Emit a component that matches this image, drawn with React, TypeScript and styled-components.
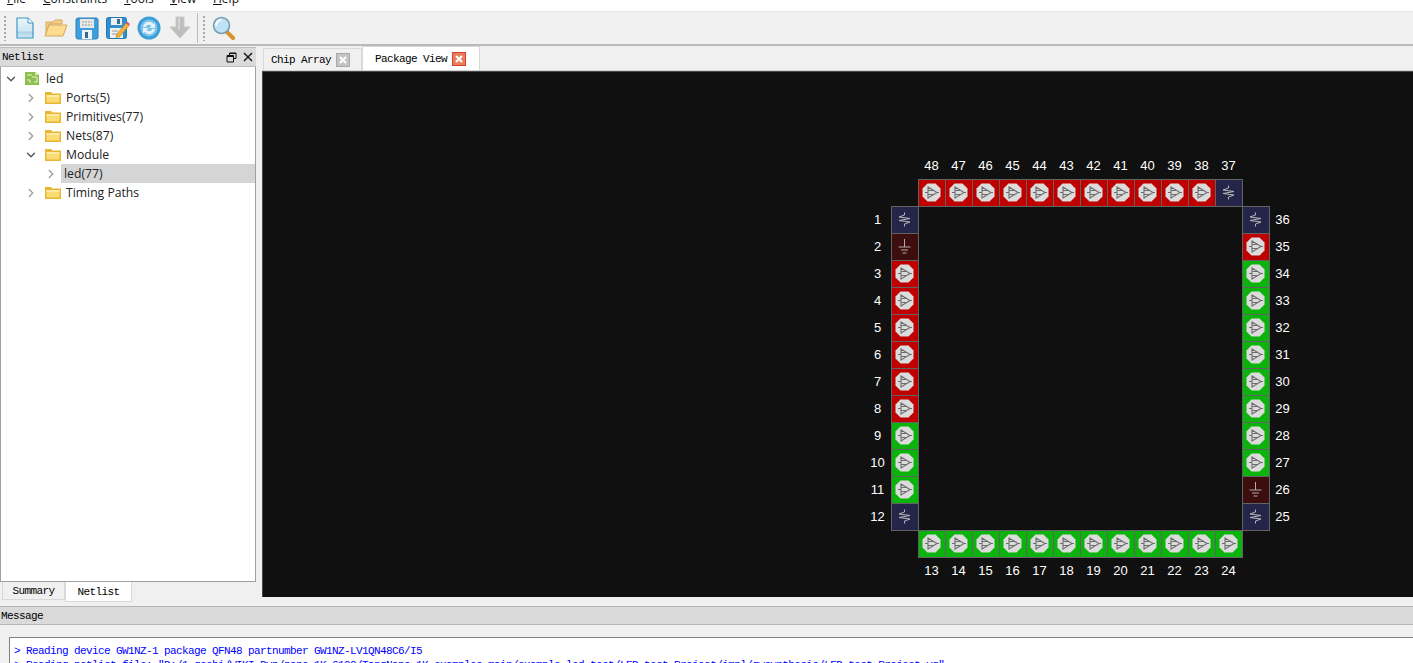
import React from "react";
import styled, { createGlobalStyle } from "styled-components";
import { ChevronDown, ChevronRight } from "lucide-react";

const GlobalStyle = createGlobalStyle`
  html, body {
    margin: 0;
    padding: 0;
    background: #f0f0f0;
    overflow: hidden;
  }
  * { box-sizing: border-box; }
`;

const mono = `
  font-family: "Liberation Mono", monospace;
  font-size: 11px;
  letter-spacing: -0.6px;
`;

const Page = styled.div`
  width: 1413px;
  height: 663px;
  display: flex;
  flex-direction: column;
  overflow: hidden;
  background: #f0f0f0;
`;

const MenuBar = styled.div`
  height: 12px;
  flex: none;
  display: flex;
  align-items: flex-end;
  overflow: hidden;
  background: #ffffff;
  border-bottom: 1px solid #e6e6e6;
  padding: 0 0 4px 7px;
  font-family: "Open Sans", sans-serif;
  font-size: 12px;
  line-height: 16px;
  color: #111;
`;

const MenuItem = styled.span<{ $w: number }>`
  width: ${(p) => p.$w}px;
  flex: none;
  white-space: nowrap;
`;

const Mnemonic = styled.span`
  text-decoration: underline;
`;

const ToolBar = styled.div`
  height: 34px;
  flex: none;
  display: flex;
  align-items: center;
  background: #f1f1f1;
  border-bottom: 2px solid #b9b9b9;
  padding-left: 4px;
`;

const Grip = styled.div`
  width: 2px;
  height: 25px;
  flex: none;
  margin-right: 3px;
  background-image: linear-gradient(#a8a8a8 50%, transparent 50%);
  background-size: 2px 4px;
`;

const ToolButton = styled.div`
  width: 31px;
  height: 30px;
  flex: none;
  display: flex;
  align-items: center;
  justify-content: center;
`;

const ToolSep = styled.div`
  width: 1px;
  height: 30px;
  flex: none;
  margin: 0 5px 0 2px;
  background: #b9b9b9;
`;

const Middle = styled.div`
  height: 559px;
  flex: none;
  display: flex;
`;

const LeftDock = styled.div`
  width: 262px;
  flex: none;
  display: flex;
  flex-direction: column;
  padding: 1px 6px 0 0;
`;

const DockHeader = styled.div`
  height: 20px;
  flex: none;
  display: flex;
  align-items: center;
  justify-content: space-between;
  padding: 0 3px 0 2px;
  background: #dadada;
  border-top: 1px solid #bdbdbd;
  border-bottom: 1px solid #bdbdbd;
  color: #000;
  ${mono}
`;

const DockButtons = styled.div`
  display: flex;
  align-items: center;
  gap: 6px;
`;

const TreePanel = styled.div`
  height: 515px;
  flex: none;
  background: #ffffff;
  border: 1px solid #a0a0a0;
  border-top: none;
  padding-top: 2px;
  font-family: "Open Sans", sans-serif;
  font-size: 12.2px;
  color: #222;
`;

const TreeRow = styled.div<{ $level: number }>`
  height: 19px;
  display: flex;
  align-items: center;
  padding-left: ${(p) => 3 + p.$level * 20}px;
  white-space: nowrap;
`;

const Chevron = styled.span<{ $open?: boolean }>`
  width: 14px;
  flex: none;
  display: flex;
  align-items: center;
  justify-content: center;
  color: ${(p) => (p.$open ? "#555555" : "#a0a0a0")};
`;

const TreeIcon = styled.span`
  width: 21px;
  margin-left: 7px;
  flex: none;
  display: flex;
  align-items: center;
`;

const TreeLabel = styled.span<{ $selected?: boolean }>`
  flex: ${(p) => (p.$selected ? 1 : "none")};
  height: 19px;
  line-height: 19px;
  margin-left: ${(p) => (p.$selected ? "3px" : "0")};
  padding-left: ${(p) => (p.$selected ? "3px" : "0")};
  background: ${(p) => (p.$selected ? "#d5d5d5" : "transparent")};
`;

const BottomTabs = styled.div`
  display: flex;
  height: 20px;
  flex: none;
  padding-left: 2px;
`;

const BottomTab = styled.div<{ $active?: boolean }>`
  height: ${(p) => (p.$active ? "20px" : "18px")};
  width: ${(p) => (p.$active ? "67px" : "63px")};
  display: flex;
  align-items: center;
  justify-content: center;
  background: ${(p) => (p.$active ? "#ffffff" : "#f0f0f0")};
  border: 1px solid #d9d9d9;
  border-top: none;
  color: #000;
  ${mono}
`;

const RightPane = styled.div`
  flex: 1;
  min-width: 0;
  display: flex;
  flex-direction: column;
`;

const TabBar = styled.div`
  height: 25px;
  flex: none;
  display: flex;
  align-items: flex-end;
  padding-left: 1px;
  border-bottom: 1px solid #d0d0d0;
`;

const Tab = styled.div<{ $active?: boolean; $w: number }>`
  width: ${(p) => p.$w}px;
  height: ${(p) => (p.$active ? "24px" : "22px")};
  display: flex;
  align-items: center;
  gap: 5px;
  padding-left: ${(p) => (p.$active ? "12px" : "7px")};
  background: ${(p) => (p.$active ? "#ffffff" : "#f0f0f0")};
  border: 1px solid #d9d9d9;
  border-bottom: none;
  color: #000;
  ${mono}
`;

const CloseBox = styled.span<{ $active?: boolean }>`
  width: 14px;
  height: 14px;
  flex: none;
  display: flex;
  align-items: center;
  justify-content: center;
  border: 1px solid ${(p) => (p.$active ? "#d9402b" : "#a8a8a8")};
  background: ${(p) => (p.$active ? "#e8805f" : "#c4c4c4")};
`;

const Canvas = styled.div`
  height: 526px;
  flex: none;
  padding: 80px 0 0 601px;
  background: #101010;
  border-top: 1px solid #4a4a4a;
  border-left: 1px solid #4a4a4a;
`;

const ChipGrid = styled.div`
  display: grid;
  grid-template-columns: repeat(16, 27px);
  grid-template-rows: repeat(16, 27px);
  width: 432px;
  height: 432px;
`;

const pinColors = {
  red: "#bf0000",
  green: "#0cb30c",
  vcc: "#25254a",
  gnd: "#3d0e0e",
};

type PinKind = keyof typeof pinColors;

const PinCell = styled.div<{ $kind: PinKind; $row: number; $col: number }>`
  grid-row: ${(p) => p.$row};
  grid-column: ${(p) => p.$col};
  margin: 0 -1px -1px 0;
  padding: 0 1px 1px 0;
  display: flex;
  align-items: center;
  justify-content: center;
  background: ${(p) => pinColors[p.$kind]};
  border: 1px solid #626262;
`;

const PinNumber = styled.div<{ $row: number; $col: number }>`
  grid-row: ${(p) => p.$row};
  grid-column: ${(p) => p.$col};
  display: flex;
  align-items: center;
  justify-content: center;
  font-family: "Liberation Sans", sans-serif;
  font-size: 13px;
  color: #ffffff;
`;

const MessageDock = styled.div`
  flex: 1;
  display: flex;
  flex-direction: column;
  min-height: 0;
`;

const MessageHeader = styled.div`
  height: 19px;
  flex: none;
  margin-top: 1px;
  padding-left: 1px;
  display: flex;
  align-items: center;
  background: #dadada;
  border-top: 1px solid #b5b5b5;
  border-bottom: 1px solid #b5b5b5;
  color: #000;
  ${mono}
`;

const MessageBox = styled.div`
  flex: 1;
  margin: 12px 0 0 9px;
  padding: 6px 0 0 4px;
  background: #ffffff;
  border-top: 1px solid #808080;
  border-left: 1px solid #808080;
  color: #0000ff;
  white-space: pre;
  line-height: 14px;
  overflow: hidden;
  ${mono}
`;

const NewIcon = () => (
  <svg width="24" height="24" viewBox="0 0 24 24">
    <defs>
      <linearGradient id="newFill" x1="0" y1="0" x2="0" y2="1">
        <stop offset="0" stopColor="#eaf5fb" />
        <stop offset="0.65" stopColor="#cfe6f3" />
        <stop offset="0.7" stopColor="#a9d3e8" />
        <stop offset="1" stopColor="#d3eaf6" />
      </linearGradient>
    </defs>
    <path d="M4 2h11l5 5v15H4z" fill="url(#newFill)" stroke="#3d97c6" strokeWidth="1.2" />
    <path d="M15 2v5h5" fill="#fff" stroke="#3d97c6" />
  </svg>
);

const OpenIcon = () => (
  <svg width="24" height="24" viewBox="0 0 24 24">
    <path d="M2 6h7l2-2h7v4H5L2 20z" fill="#f3cc85" stroke="#d3a860" />
    <path d="M5 9h18l-4 11H1z" fill="#fbdc91" stroke="#d3a860" />
  </svg>
);

const SaveIcon = () => (
  <svg width="24" height="24" viewBox="0 0 24 24">
    <rect x="1" y="2" width="22" height="21" rx="2" fill="#3f9fdc" stroke="#2a7fb8" />
    <rect x="5" y="3" width="14" height="9" fill="#e8e8e8" />
    <path d="M7 6h10M7 9h10" stroke="#999" strokeWidth="1" strokeDasharray="2 1" />
    <rect x="7" y="14" width="10" height="9" fill="#eef3f6" />
    <rect x="10" y="16" width="3" height="6" fill="#33688c" />
  </svg>
);

const SaveAsIcon = () => (
  <svg width="24" height="24" viewBox="0 0 24 24">
    <rect x="0.5" y="1.5" width="20" height="21" rx="2" fill="#2f8fd2" stroke="#2477ae" />
    <rect x="5" y="2" width="11" height="7" fill="#f0f0f0" />
    <rect x="11" y="3" width="3" height="5" fill="#3a6f94" />
    <rect x="4" y="12" width="13" height="10" fill="#eef0f0" />
    <path d="M6 15h6M6 18h5" stroke="#999" />
    <path d="M11 18L20 7l3 2.5-9 11-4 1z" fill="#f3b13c" stroke="#b37a1a" strokeWidth="0.6" />
    <path d="M20 7l3 2.5 1-1.5-3-2.5z" fill="#e0507a" />
  </svg>
);

const RefreshIcon = () => (
  <svg width="24" height="24" viewBox="0 0 24 24">
    <circle cx="12" cy="12" r="11.5" fill="#3d9ed8" />
    <circle cx="12" cy="12" r="8.5" fill="#7dc4ea" />
    <path d="M6 11a6 6 0 0 1 10.5-3L18 6.5V12h-5.5l2-2A3.4 3.4 0 0 0 8.6 11z" fill="#e4f3fb" />
    <path d="M18 13a6 6 0 0 1-10.5 3L6 17.5V12h5.5l-2 2a3.4 3.4 0 0 0 5.9-1z" fill="#e4f3fb" />
  </svg>
);

const DownIcon = () => (
  <svg width="22" height="24" viewBox="0 0 22 24">
    <path d="M7 1h8v10h6L11 22 1 11h6z" fill="#bdbdbd" stroke="#c9c9c9" />
    <path d="M9 2h2v12H9z" fill="#d5d5d5" />
  </svg>
);

const SearchIcon = () => (
  <svg width="24" height="24" viewBox="0 0 24 24">
    <path d="M14 15l7 7" stroke="#d9932c" strokeWidth="4" strokeLinecap="round" />
    <circle cx="9.5" cy="9.5" r="8" fill="#bfe3f6" stroke="#7b9db3" strokeWidth="1.6" />
    <path d="M4 9.5a5.5 5.5 0 0 1 5.5-5.5" stroke="#fff" strokeWidth="2" fill="none" />
  </svg>
);

const FolderIcon = () => (
  <svg width="16" height="13" viewBox="0 0 16 13">
    <path d="M0 1h6l1.5 1.5H16V13H0z" fill="#e8b630" />
    <path d="M1.5 4h13v7.5h-13z" fill="#fbdc72" />
    <path d="M1.5 4h13v2h-13z" fill="#fdeaa6" />
  </svg>
);

const NetlistIcon = () => (
  <svg width="15" height="13" viewBox="0 0 15 13">
    <path d="M0 0h10l4 3v10H0z" fill="#8dbf4e" />
    <path d="M2 3h5M2 8h3v3M7 5h5v5h-3" stroke="#e7f2d3" strokeWidth="1" fill="none" />
    <path d="M10 0v3h4z" fill="#d7e8bb" />
  </svg>
);

const FloatIcon = () => (
  <svg width="11" height="11" viewBox="0 0 11 11">
    <path d="M3.5 3V1h6.5v5.5H8M1 3.5h6.5V10H1zM1 4.5h6.5M3.5 1.5H10" stroke="#111" fill="none" />
  </svg>
);

const CloseIcon = () => (
  <svg width="10" height="10" viewBox="0 0 10 10">
    <path d="M1 1l8 8M9 1l-8 8" stroke="#111" strokeWidth="1.4" />
  </svg>
);

const TabX = () => (
  <svg width="8" height="8" viewBox="0 0 8 8">
    <path d="M1 1l6 6M7 1L1 7" stroke="#ffffff" strokeWidth="2" />
  </svg>
);

const IoIcon = () => (
  <svg width="19" height="19" viewBox="0 0 19 19">
    <path d="M5.5 0.5h8L18.5 5.5v8L13.5 18.5h-8L0.5 13.5v-8z" fill="#dcdcdc" />
    <path
      d="M6 4L15 9.5 6 15zM3 9.5h3M15 9.5h2M6 7.5h5M6 11.5h5"
      stroke="#6e6e6e"
      strokeWidth="1.1"
      fill="none"
    />
  </svg>
);

const VccIcon = () => (
  <svg width="17" height="17" viewBox="0 0 17 17">
    <path
      d="M8.5 1.5v2.5L3 6l11 1.5L3 9.5 14 11l-5.5 2v2.5"
      stroke="#b8b8b8"
      strokeWidth="1"
      fill="none"
    />
  </svg>
);

const GndIcon = () => (
  <svg width="17" height="17" viewBox="0 0 17 17">
    <path d="M8.5 1v8M2.5 9h12M5 12h7M6.5 15h4" stroke="#b4a8a8" strokeWidth="1" fill="none" />
  </svg>
);

const pinGlyph = (kind: PinKind) => {
  if (kind === "vcc") return <VccIcon />;
  if (kind === "gnd") return <GndIcon />;
  return <IoIcon />;
};

const leftKinds: PinKind[] = ["vcc", "gnd", "red", "red", "red", "red", "red", "red", "green", "green", "green", "vcc"];
const bottomKinds: PinKind[] = Array(12).fill("green");
const rightKinds: PinKind[] = ["vcc", "red", "green", "green", "green", "green", "green", "green", "green", "green", "gnd", "vcc"];
const topKinds: PinKind[] = [...Array(11).fill("red"), "vcc"];

const treeRows = [
  { name: "Ports(5)", level: 1 },
  { name: "Primitives(77)", level: 1 },
  { name: "Nets(87)", level: 1 },
  { name: "Module", level: 1, open: true },
];

const Chip = () => {
  const pins: { n: number; kind: PinKind; row: number; col: number; lr: number; lc: number }[] = [];
  leftKinds.forEach((kind, i) => pins.push({ n: i + 1, kind, row: i + 3, col: 2, lr: i + 3, lc: 1 }));
  bottomKinds.forEach((kind, i) => pins.push({ n: i + 13, kind, row: 15, col: i + 3, lr: 16, lc: i + 3 }));
  rightKinds.forEach((kind, i) => pins.push({ n: 36 - i, kind, row: i + 3, col: 15, lr: i + 3, lc: 16 }));
  topKinds.forEach((kind, i) => pins.push({ n: 48 - i, kind, row: 2, col: i + 3, lr: 1, lc: i + 3 }));

  return (
    <ChipGrid>
      {pins.map((p) => (
        <React.Fragment key={p.n}>
          <PinNumber $row={p.lr} $col={p.lc}>{p.n}</PinNumber>
          <PinCell $kind={p.kind} $row={p.row} $col={p.col}>{pinGlyph(p.kind)}</PinCell>
        </React.Fragment>
      ))}
    </ChipGrid>
  );
};

export default function App() {
  return (
    <Page>
      <GlobalStyle />
      <MenuBar>
        <MenuItem $w={36}><Mnemonic>F</Mnemonic>ile</MenuItem>
        <MenuItem $w={81}><Mnemonic>C</Mnemonic>onstraints</MenuItem>
        <MenuItem $w={46}><Mnemonic>T</Mnemonic>ools</MenuItem>
        <MenuItem $w={43}><Mnemonic>V</Mnemonic>iew</MenuItem>
        <MenuItem $w={40}><Mnemonic>H</Mnemonic>elp</MenuItem>
      </MenuBar>
      <ToolBar>
        <Grip />
        <ToolButton><NewIcon /></ToolButton>
        <ToolButton><OpenIcon /></ToolButton>
        <ToolButton><SaveIcon /></ToolButton>
        <ToolButton><SaveAsIcon /></ToolButton>
        <ToolButton><RefreshIcon /></ToolButton>
        <ToolButton><DownIcon /></ToolButton>
        <ToolSep />
        <Grip />
        <ToolButton><SearchIcon /></ToolButton>
      </ToolBar>
      <Middle>
        <LeftDock>
          <DockHeader>
            Netlist
            <DockButtons>
              <FloatIcon />
              <CloseIcon />
            </DockButtons>
          </DockHeader>
          <TreePanel>
            <TreeRow $level={0}>
              <Chevron $open><ChevronDown size={14} strokeWidth={2.4} /></Chevron>
              <TreeIcon><NetlistIcon /></TreeIcon>
              <TreeLabel>led</TreeLabel>
            </TreeRow>
            {treeRows.map((r) => (
              <TreeRow key={r.name} $level={r.level}>
                <Chevron $open={r.open}>
                  {r.open ? <ChevronDown size={14} strokeWidth={2.4} /> : <ChevronRight size={14} strokeWidth={2.4} />}
                </Chevron>
                <TreeIcon><FolderIcon /></TreeIcon>
                <TreeLabel>{r.name}</TreeLabel>
              </TreeRow>
            ))}
            <TreeRow $level={2}>
              <Chevron><ChevronRight size={14} strokeWidth={2.4} /></Chevron>
              <TreeLabel $selected>led(77)</TreeLabel>
            </TreeRow>
            <TreeRow $level={1}>
              <Chevron><ChevronRight size={14} strokeWidth={2.4} /></Chevron>
              <TreeIcon><FolderIcon /></TreeIcon>
              <TreeLabel>Timing Paths</TreeLabel>
            </TreeRow>
          </TreePanel>
          <BottomTabs>
            <BottomTab>Summary</BottomTab>
            <BottomTab $active>Netlist</BottomTab>
          </BottomTabs>
        </LeftDock>
        <RightPane>
          <TabBar>
            <Tab $w={99}>
              Chip Array
              <CloseBox><TabX /></CloseBox>
            </Tab>
            <Tab $w={118} $active>
              Package View
              <CloseBox $active><TabX /></CloseBox>
            </Tab>
          </TabBar>
          <Canvas>
            <Chip />
          </Canvas>
        </RightPane>
      </Middle>
      <MessageDock>
        <MessageHeader>Message</MessageHeader>
        <MessageBox>
          {"> Reading device GW1NZ-1 package QFN48 partnumber GW1NZ-LV1QN48C6/I5\n"}
          {'> Reading netlist file: "D:/1_gechi/WIKI_Dvp/nano_1K_6100/TangNano-1K-examples-main/example_led-test/LED-test-Project/impl/gwsynthesis/LED-test-Project.vg"'}
        </MessageBox>
      </MessageDock>
    </Page>
  );
}
